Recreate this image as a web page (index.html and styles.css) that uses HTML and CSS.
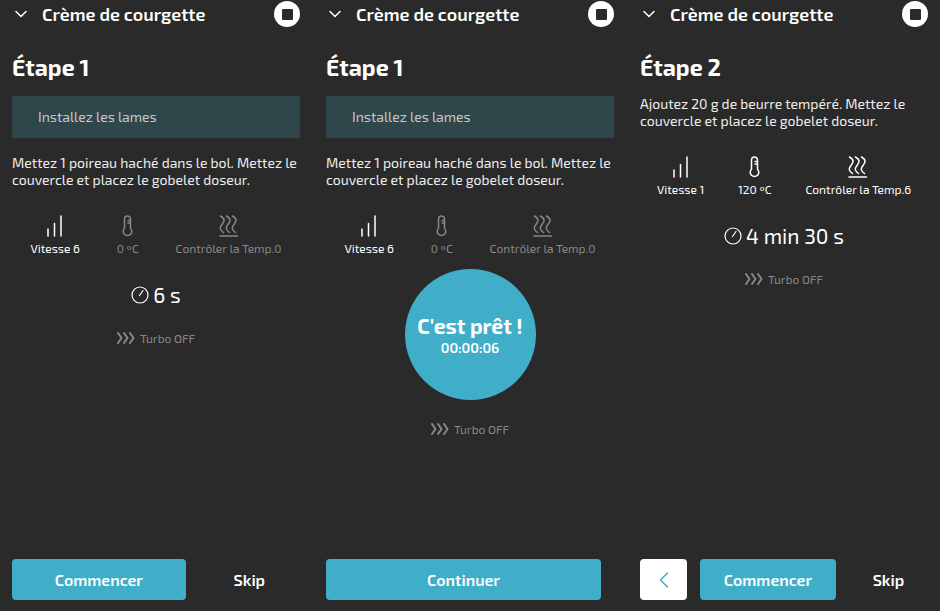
FILE: index.html
```html
<!DOCTYPE html>
<html lang="fr">
<head>
  <meta charset="UTF-8">
  <meta name="viewport" content="width=device-width, initial-scale=1.0">
  <title>Crème de courgette</title>
  <link rel="stylesheet" href="styles.css">
</head>
<body>
  <!-- Shared icons -->
  <svg class="sprite" aria-hidden="true">
    <symbol id="icon-down" viewBox="0 0 12 8"><path d="M1 1.5 L6 6.5 L11 1.5"/></symbol>
    <symbol id="icon-back" viewBox="0 0 10 16"><path d="M8.5 1 L1.5 8 L8.5 15"/></symbol>
    <symbol id="icon-speed" viewBox="0 0 20 22"><path d="M3 14 V21 M9.5 8.5 V21 M16 1 V21"/></symbol>
    <symbol id="icon-temp" viewBox="0 0 20 22"><path d="M6.5 13.2 V4 a3 3 0 0 1 6 0 V13.2 a4.3 4.3 0 1 1 -6 0 Z M10 5.5 H12 M10 8 H12"/></symbol>
    <symbol id="icon-heat" viewBox="0 0 20 22"><path d="M1.5 1 C6.5 4 5.5 6.5 3 9.5 C0.5 12.5 0.5 14.5 4.5 17.5 M7.5 1 C12.5 4 11.5 6.5 9 9.5 C6.5 12.5 6.5 14.5 10.5 17.5 M13.5 1 C18.5 4 17.5 6.5 15 9.5 C12.5 12.5 12.5 14.5 16.5 17.5 M1 21 H18.5"/></symbol>
    <symbol id="icon-clock" viewBox="0 0 18 18"><circle cx="9" cy="9" r="8"/><path d="M8.5 9.5 L12 4.5"/></symbol>
    <symbol id="icon-turbo" viewBox="0 0 18 12"><path d="M1 1 L4.5 6 L1 11 M7 1 L10.5 6 L7 11 M13 1 L16.5 6 L13 11"/></symbol>
  </svg>

  <div class="screens">
    <section class="screen">
      <header>
        <button class="collapse" aria-label="Réduire"><svg><use href="#icon-down"/></svg></button>
        <h1>Crème de courgette</h1>
        <button class="stop" aria-label="Arrêter"><span></span></button>
      </header>
      <h2>Étape 1</h2>
      <div class="notice">Installez les lames</div>
      <p>Mettez 1 poireau haché dans le bol. Mettez le couvercle et placez le gobelet doseur.</p>
      <ul class="settings">
        <li><svg><use href="#icon-speed"/></svg>Vitesse 6</li>
        <li class="off"><svg><use href="#icon-temp"/></svg>0 ºC</li>
        <li class="off"><svg><use href="#icon-heat"/></svg>Contrôler la Temp.0</li>
      </ul>
      <div class="time"><svg><use href="#icon-clock"/></svg>6 s</div>
      <div class="turbo"><svg><use href="#icon-turbo"/></svg>Turbo OFF</div>
      <footer>
        <button class="primary">Commencer</button>
        <button class="skip">Skip</button>
      </footer>
    </section>

    <section class="screen">
      <header>
        <button class="collapse" aria-label="Réduire"><svg><use href="#icon-down"/></svg></button>
        <h1>Crème de courgette</h1>
        <button class="stop" aria-label="Arrêter"><span></span></button>
      </header>
      <h2>Étape 1</h2>
      <div class="notice">Installez les lames</div>
      <p>Mettez 1 poireau haché dans le bol. Mettez le couvercle et placez le gobelet doseur.</p>
      <ul class="settings">
        <li><svg><use href="#icon-speed"/></svg>Vitesse 6</li>
        <li class="off"><svg><use href="#icon-temp"/></svg>0 ºC</li>
        <li class="off"><svg><use href="#icon-heat"/></svg>Contrôler la Temp.0</li>
      </ul>
      <div class="ready">
        <strong>C'est prêt !</strong>
        <span>00:00:06</span>
      </div>
      <div class="turbo"><svg><use href="#icon-turbo"/></svg>Turbo OFF</div>
      <footer class="single">
        <button class="primary">Continuer</button>
      </footer>
    </section>

    <section class="screen">
      <header>
        <button class="collapse" aria-label="Réduire"><svg><use href="#icon-down"/></svg></button>
        <h1>Crème de courgette</h1>
        <button class="stop" aria-label="Arrêter"><span></span></button>
      </header>
      <h2>Étape 2</h2>
      <p>Ajoutez 20 g de beurre tempéré. Mettez le couvercle et placez le gobelet doseur.</p>
      <ul class="settings">
        <li><svg><use href="#icon-speed"/></svg>Vitesse 1</li>
        <li><svg><use href="#icon-temp"/></svg>120 ºC</li>
        <li><svg><use href="#icon-heat"/></svg>Contrôler la Temp.6</li>
      </ul>
      <div class="time"><svg><use href="#icon-clock"/></svg>4 min 30 s</div>
      <div class="turbo"><svg><use href="#icon-turbo"/></svg>Turbo OFF</div>
      <footer>
        <button class="back" aria-label="Retour"><svg><use href="#icon-back"/></svg></button>
        <button class="primary">Commencer</button>
        <button class="skip">Skip</button>
      </footer>
    </section>
  </div>
</body>
</html>
```

FILE: styles.css
```css
/* Global Styles */
* {
  box-sizing: border-box;
}

body {
  margin: 0;
  background: #2a2a2a;
  color: #fff;
  font-family: 'Exo 2', 'Open Sans', sans-serif;
  font-size: 14px;
}

button {
  padding: 0;
  border: none;
  background: none;
  color: inherit;
  font: inherit;
  cursor: pointer;
}

svg {
  display: block;
  fill: none;
  stroke: currentColor;
  stroke-width: 1.5;
  stroke-linecap: round;
  stroke-linejoin: round;
}

.sprite {
  display: none;
}

/* Screens */
.screens {
  display: grid;
  grid-template-columns: 314fr 314fr 312fr;
  min-height: 100vh;
}

.screen {
  display: flex;
  flex-direction: column;
  padding: 0 14px 11px 12px;
}

.screen:last-child {
  padding-right: 12px;
}

header {
  display: flex;
  align-items: center;
  height: 28px;
}

header h1 {
  flex: 1;
  margin: 0;
  font-size: 18px;
  font-weight: 600;
  line-height: 28px;
}

.collapse {
  width: 30px;
  padding-left: 3px;
}

.collapse svg {
  width: 12px;
  height: 8px;
}

.stop {
  display: flex;
  align-items: center;
  justify-content: center;
  width: 26px;
  height: 26px;
  border-radius: 50%;
  background: #fff;
}

.stop span {
  width: 11px;
  height: 11px;
  border-radius: 1px;
  background: #2a2a2a;
}

h2 {
  margin: 23px 0 0;
  font-size: 23px;
  font-weight: 700;
  line-height: 32px;
}

.notice {
  margin-top: 13px;
  padding: 0 26px;
  background: #2f464a;
  color: #c8c8c8;
  line-height: 42px;
}

p {
  margin: 12px 0 0;
  color: #eee;
  line-height: 17px;
}

.notice + p {
  margin-top: 16px;
}

/* Cooking settings */
.settings {
  display: flex;
  justify-content: space-around;
  margin: 27px 0 0;
  padding: 0;
  list-style: none;
  font-size: 12px;
  line-height: 20px;
}

.settings li {
  display: flex;
  flex-direction: column;
  align-items: center;
  gap: 1px;
  white-space: nowrap;
}

.settings svg {
  width: 20px;
  height: 22px;
}

.off,
.turbo {
  color: #888;
}

.time,
.turbo {
  display: flex;
  align-items: center;
  justify-content: center;
}

.time {
  gap: 4px;
  margin-top: 23px;
  font-size: 21px;
  line-height: 28px;
}

.time svg {
  width: 18px;
  height: 18px;
  stroke-width: 1.2;
}

.turbo {
  gap: 5px;
  margin-top: 20px;
  font-size: 12px;
  line-height: 18px;
}

.turbo svg {
  width: 18px;
  height: 12px;
  stroke-width: 2;
}

.ready {
  display: flex;
  flex-direction: column;
  align-items: center;
  justify-content: center;
  align-self: center;
  width: 131px;
  height: 131px;
  margin-top: 11px;
  border-radius: 50%;
  background: #40aec9;
  font-weight: 600;
}

.ready strong {
  font-size: 21px;
  font-weight: 700;
  line-height: 26px;
}

.ready span {
  line-height: 18px;
}

/* Bottom actions */
footer {
  display: flex;
  gap: 13px;
  margin-top: auto;
  font-size: 16px;
  font-weight: 600;
}

footer button {
  height: 41px;
  border-radius: 4px;
}

.primary {
  flex: 12;
  background: #40aec9;
}

.skip {
  flex: 7;
}

.single {
  padding-right: 13px;
}

.back {
  display: flex;
  align-items: center;
  justify-content: center;
  width: 47px;
  background: #fff;
  color: #40aec9;
}

.back svg {
  width: 10px;
  height: 16px;
}
```
